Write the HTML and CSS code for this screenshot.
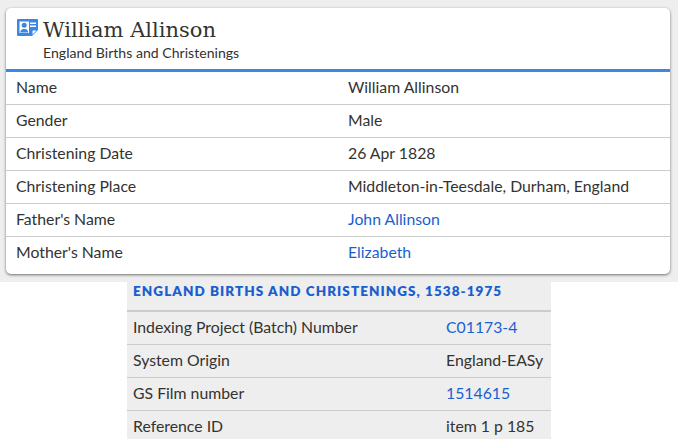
FILE: index.html
```html
<!DOCTYPE html>
<html lang="en">
<head>
<meta charset="utf-8">
<title>William Allinson</title>
<link rel="stylesheet" href="styles.css">
</head>
<body>
<section class="top">
  <article class="card">
    <header class="card-head">
      <div class="title-row">
        <svg class="icon" width="21" height="17" viewBox="0 0 21 17" aria-hidden="true">
          <path fill="#3b87e4" d="M1 0h19a1 1 0 0 1 1 1v10l-6 6H1a1 1 0 0 1-1-1V1a1 1 0 0 1 1-1z"/>
          <path fill="#fff" d="M15.500 15.500v-3.500a.6.6 0 0 1 .6-.6H19.500z"/>
          <path fill="#fff" d="M2.500 2.500h9.500v11.500H2.500z"/>
          <circle fill="#3b87e4" cx="7.200" cy="6.200" r="2.500"/>
          <path fill="#3b87e4" d="M3.200 13.500c0-2.600 1.800-3.200 3-3.500h2c1.200.3 3 .9 3 3.500z"/>
          <path fill="#fff" d="M13 3.500h6v1.400h-6zM13 6.500h6v1.400h-6z"/>
        </svg>
        <h1 class="name">William Allinson</h1>
      </div>
      <p class="subtitle">England Births and Christenings</p>
    </header>
    <dl class="rows">
      <div class="row"><dt>Name</dt><dd>William Allinson</dd></div>
      <div class="row"><dt>Gender</dt><dd>Male</dd></div>
      <div class="row"><dt>Christening Date</dt><dd>26 Apr 1828</dd></div>
      <div class="row"><dt>Christening Place</dt><dd>Middleton-in-Teesdale, Durham, England</dd></div>
      <div class="row"><dt>Father's Name</dt><dd><a href="#">John Allinson</a></dd></div>
      <div class="row"><dt>Mother's Name</dt><dd><a href="#">Elizabeth</a></dd></div>
    </dl>
  </article>
</section>
<section class="details">
  <h2 class="details-title">ENGLAND BIRTHS AND CHRISTENINGS, 1538-1975</h2>
  <dl class="detail-rows">
    <div class="detail-row"><dt>Indexing Project (Batch) Number</dt><dd><a href="#">C01173-4</a></dd></div>
    <div class="detail-row"><dt>System Origin</dt><dd>England-EASy</dd></div>
    <div class="detail-row"><dt>GS Film number</dt><dd><a href="#">1514615</a></dd></div>
    <div class="detail-row"><dt>Reference ID</dt><dd>item 1 p 185</dd></div>
  </dl>
</section>
</body>
</html>
```
FILE: styles.css
```css
* { box-sizing: border-box; }
html, body { margin: 0; padding: 0; background: #fff; }
body {
  font-family: "Lato", "Liberation Sans", sans-serif;
  font-size: 15.8px;
  color: #333331;
}
dl, dt, dd, h1, h2, p { margin: 0; padding: 0; font-weight: 400; }
a { color: #1a5fd0; text-decoration: none; }

.top { background: #eeeeee; padding: 8px 8px 8px 6px; height: 282px; }
.card {
  background: #fff;
  border-radius: 5px;
  height: 266px;
  box-shadow: 0 1px 3px rgba(0, 0, 0, 0.55);
  overflow: hidden;
}
.card-head { height: 64px; padding: 10px 0 0 11px; border-bottom: 3px solid #3b87e4; }
.title-row { display: flex; align-items: flex-start; gap: 5px; height: 26px; }
.icon { margin-top: 1px; flex: none; }
.name {
  font-family: "DejaVu Serif", "Liberation Serif", serif;
  font-size: 21px;
  line-height: 24px;
  color: #333331;
}
.subtitle { margin: 0 0 0 26px; font-size: 14.1px; line-height: 18px; }

.row {
  display: flex;
  height: 33px;
  align-items: center;
  padding: 0 0 4px 10px;
  border-bottom: 1px solid #cccccc;
}
.row:last-child { border-bottom: 0; }
.row dt { width: 332px; flex: none; }

.details { width: 424px; margin-left: 127px; background: #eeeeee; }
.details-title {
  height: 30px;
  padding: 0 0 0 6px;
  font-size: 13.5px;
  line-height: 18px;
  font-weight: 800;
  letter-spacing: 1.05px;
  color: #1a5fd0;
  border-bottom: 2px solid #cccccc;
}
.detail-row {
  display: flex;
  height: 33px;
  align-items: center;
  padding: 0 0 4px 6px;
  border-bottom: 1px solid #cccccc;
}
.detail-row:last-child { border-bottom: 0; height: 28px; padding: 0 0 0 6px; }
.detail-row dt { width: 313px; flex: none; }
```
